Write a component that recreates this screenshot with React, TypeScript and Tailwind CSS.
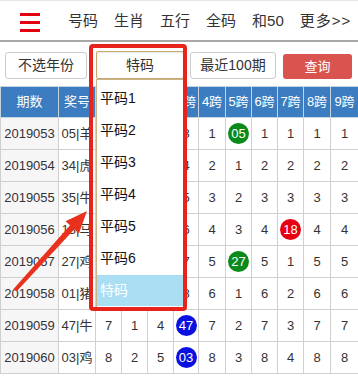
import React from "react";

type Cell = number | { ball: string; color: string } | null;

const G = "#0a8a1a";
const R = "#e60012";
const B = "#0a10e0";

const rows: { q: string; h: string; c: Cell[] }[] = [
  { q: "2019053", h: "05|羊", c: [1, 3, 2, 3, 1, { ball: "05", color: G }, 1, 1, 1, 1] },
  { q: "2019054", h: "34|虎", c: [2, { ball: "34", color: R }, 3, 4, 2, 1, 2, 2, 2, 2] },
  { q: "2019055", h: "35|牛", c: [3, 1, { ball: "35", color: R }, 5, 3, 2, 3, 3, 3, 3] },
  { q: "2019056", h: "18|马", c: [4, 2, 1, 6, 4, 3, 4, { ball: "18", color: R }, 4, 4] },
  { q: "2019057", h: "27|鸡", c: [5, 3, 2, 7, 5, { ball: "27", color: G }, 5, 1, 5, 5] },
  { q: "2019058", h: "01|猪", c: [6, { ball: "01", color: R }, 3, 8, 6, 1, 6, 2, 6, 6] },
  { q: "2019059", h: "47|牛", c: [7, 1, 4, { ball: "47", color: B }, 7, 2, 7, 3, 7, 7] },
  { q: "2019060", h: "03|鸡", c: [8, 2, 5, { ball: "03", color: B }, 8, 3, 8, 4, 8, 8] },
];

const widths = [58, 37, 26, 26, 26, 25, 27, 26, 26, 26, 27, 28, 30];

const nav = ["号码", "生肖", "五行", "全码", "和50", "更多>>"];
const items = ["平码1", "平码2", "平码3", "平码4", "平码5", "平码6"];

export default function App() {
  return (
    <div className="relative w-[358px] h-[376px] overflow-hidden bg-white text-[#333] font-['Liberation_Sans','Noto_Sans_CJK_SC',sans-serif]">
      {/* header */}
      <div className="h-[42px] border-t border-[#e6e6e6] border-b-2 border-b-[#a8a8a8] flex items-center">
        <div className="ml-[20px] w-[20px] flex flex-col gap-[5px] mt-[3px]">
          <div className="h-[3px] bg-[#e60012]" />
          <div className="h-[3px] bg-[#e60012]" />
          <div className="h-[3px] bg-[#e60012]" />
        </div>
        <div className="ml-[28px] flex items-center gap-[16px] text-[15px] mt-[2px]">
          {nav.map((n) => (
            <span key={n} className={n === "更多>>" ? "tracking-[1px]" : ""}>
              {n}
            </span>
          ))}
        </div>
      </div>

      {/* filter row */}
      <div className="h-[37px] flex items-end pl-[5px] text-[14px]">
        <div className="w-[82px] h-[27px] border border-[#ccc] rounded-[3px] flex items-center justify-center">
          不选年份
        </div>
        <div className="ml-[9px] w-[88px] h-[28px] border border-[#c9a66b] rounded-[2px] shadow-[inset_0_1px_2px_rgba(0,0,0,0.1)] flex items-center justify-center">
          特码
        </div>
        <div className="ml-[6px] w-[86px] h-[27px] border border-[#ccc] rounded-[3px] flex items-center justify-center">
          最近100期
        </div>
        <div className="ml-[7px] w-[69px] h-[25px] bg-[#d9534f] rounded-[3px] text-white text-[13px] flex items-center justify-center">
          查询
        </div>
      </div>

      {/* table */}
      <div className="mt-[7px] w-[358px] overflow-hidden">
        <table className="table-fixed border-collapse w-[388px] text-[13px]">
          <colgroup>
            {widths.map((w, i) => (
              <col key={i} style={{ width: w }} />
            ))}
          </colgroup>
          <thead>
            <tr className="h-[31px] bg-[#3b7dc0] text-white">
              <th className="border border-[#c5d2e0] font-normal">期数</th>
              <th className="border border-[#c5d2e0] font-normal">奖号</th>
              {[0, 1, 2, 3, 4, 5, 6, 7, 8, 9].map((i) => (
                <th key={i} className="border border-[#c5d2e0] font-normal whitespace-nowrap px-0">
                  {i}跨
                </th>
              ))}
              <th className="border border-[#c5d2e0] font-normal" />
            </tr>
          </thead>
          <tbody>
            {rows.map((r) => (
              <tr key={r.q} className="h-[32px]">
                <td className="border border-[#d0d0d0] bg-[#f6f6f6] text-center">{r.q}</td>
                <td className="border border-[#d0d0d0] text-center whitespace-nowrap overflow-hidden">{r.h}</td>
                {r.c.map((c, i) => (
                  <td key={i} className="border border-[#d0d0d0] text-center p-0">
                    {c !== null && typeof c === "object" ? (
                      <div
                        className="mx-auto w-[21px] h-[21px] rounded-full text-white flex items-center justify-center text-[13px]"
                        style={{ backgroundColor: c.color }}
                      >
                        {c.ball}
                      </div>
                    ) : (
                      c
                    )}
                  </td>
                ))}
                <td className="border border-[#d0d0d0]" />
              </tr>
            ))}
          </tbody>
        </table>
      </div>

      {/* dropdown list */}
      <div className="absolute left-[96px] top-[79px] w-[88px] h-[229px] bg-white border border-[#c9b48a] pt-[2px] text-[14px] text-[#111]">
        {items.map((t) => (
          <div key={t} className="h-[32px] flex items-center pl-[3px]">
            {t}
          </div>
        ))}
        <div className="h-[31px] mt-[1px] flex items-center pl-[3px] bg-[#a9def3] text-white">特码</div>
      </div>

      {/* red highlight box */}
      <div className="absolute left-[89px] top-[44px] w-[98px] h-[267px] border-[4px] border-[#e8231b] rounded-[4px]" />

      {/* red arrow */}
      <svg className="absolute left-0 top-0" width="358" height="376" viewBox="0 0 358 376">
        <polygon
          points="13.5,289 70,225.3 65.5,221.2 87,211 78.9,233.4 74.4,229.3 16.5,291.5"
          fill="#e8321e"
        />
      </svg>
    </div>
  );
}
